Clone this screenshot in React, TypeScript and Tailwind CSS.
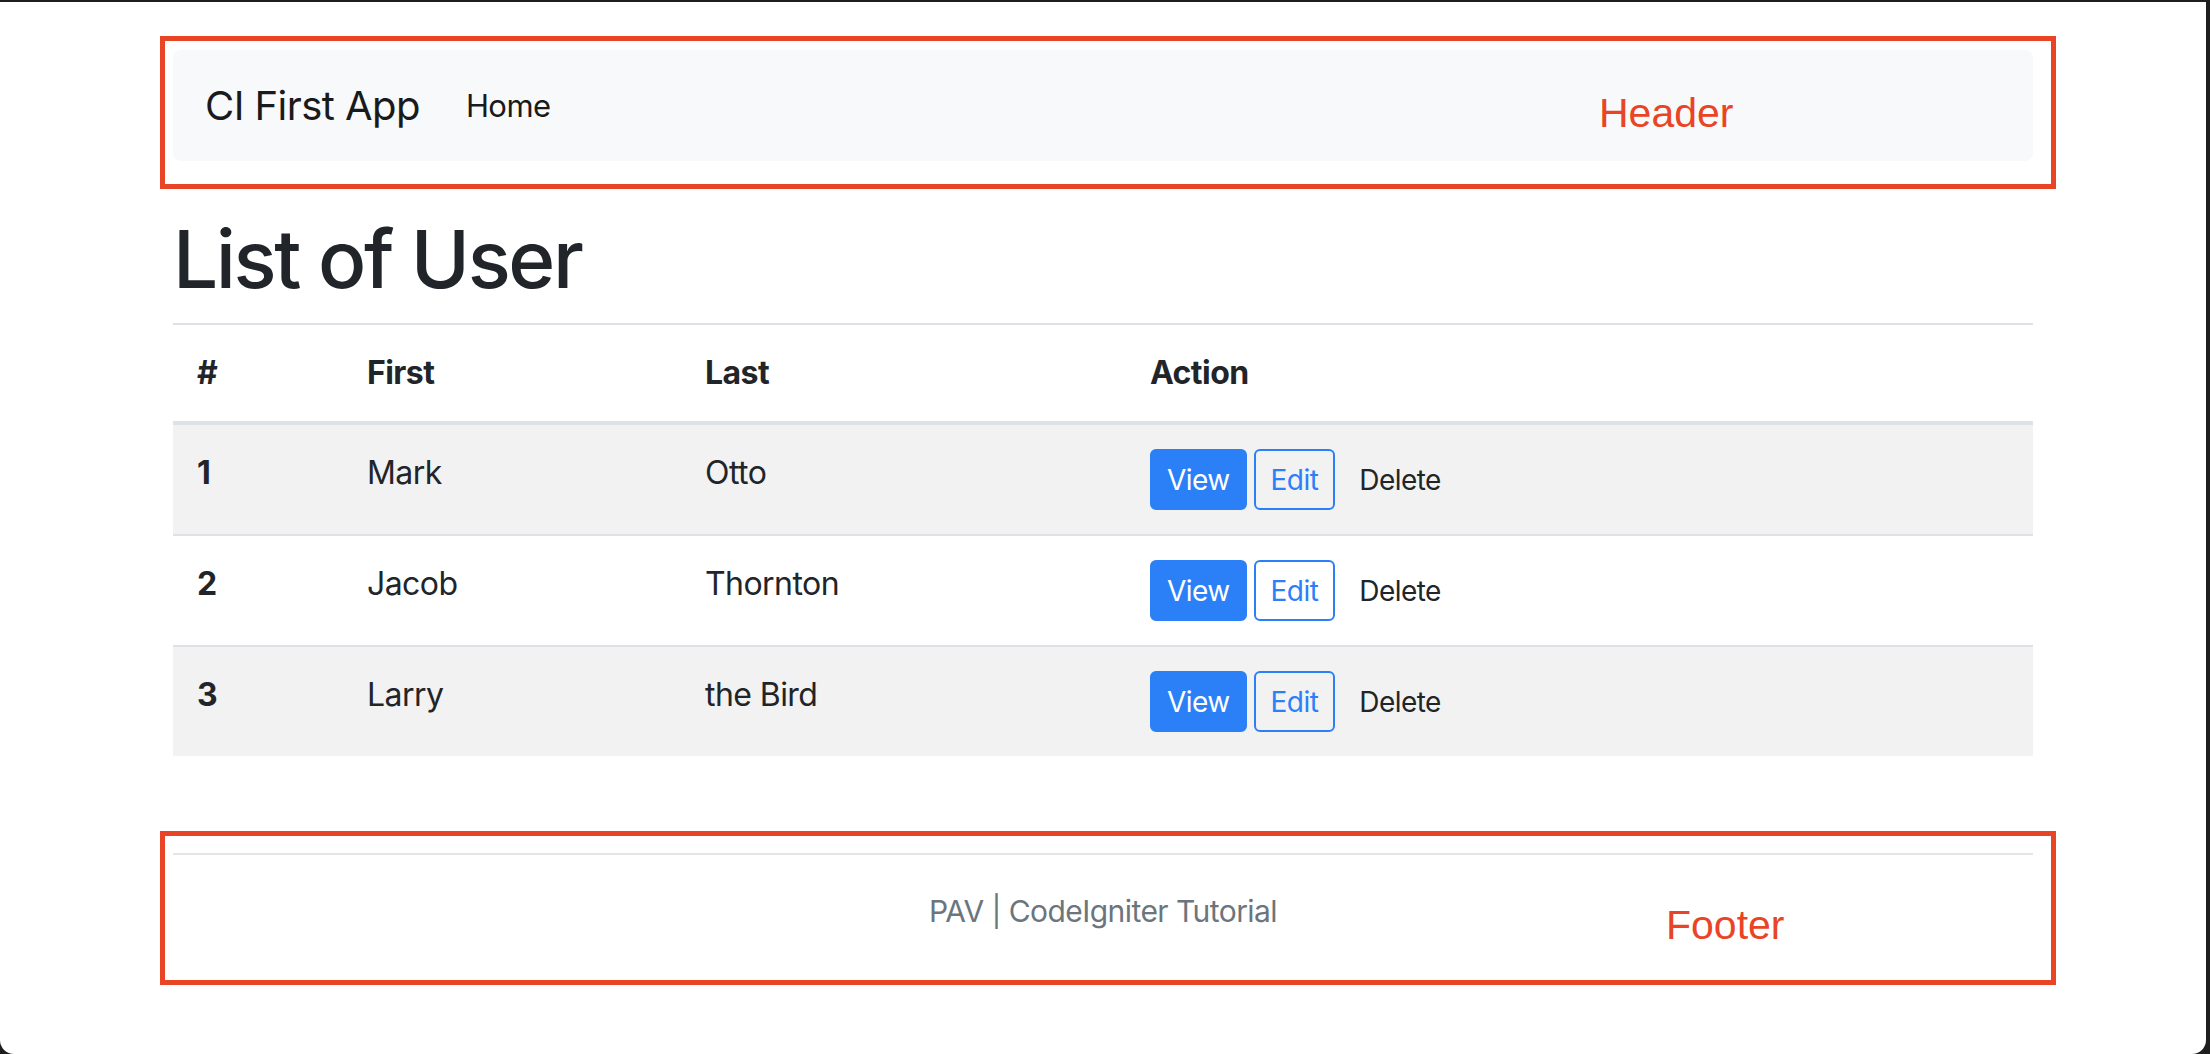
const users = [
  { id: 1, first: "Mark", last: "Otto" },
  { id: 2, first: "Jacob", last: "Thornton" },
  { id: 3, first: "Larry", last: "the Bird" },
];

// red annotation box drawn over a section of the page
function Annotation({ label, boxClass, labelClass }: { label: string; boxClass: string; labelClass: string }) {
  return (
    <div className={`pointer-events-none absolute left-[-13px] right-[-23px] border-[5px] border-[#e94425] ${boxClass}`}>
      <span
        className={`absolute font-['Liberation_Sans',Arial,sans-serif] text-[41px] leading-none tracking-normal text-[#e94425] ${labelClass}`}
      >
        {label}
      </span>
    </div>
  );
}

export default function App() {
  return (
    <div className="h-[1054px] w-full overflow-hidden bg-[#1e1e1e] pt-[2px] pr-[4px]">
      <div className="h-[1052px] rounded-b-[14px] bg-white pt-[48px] font-['Inter',sans-serif] tracking-[-0.035em] text-[#212529]">
        <div className="mx-auto w-[1860px]">
          {/* Header */}
          <div className="relative">
            <nav className="flex h-[111px] items-center rounded-[8px] bg-[#f8f9fa] px-[32px]">
              <span className="mr-[30px] text-[40px] leading-[60px] text-[#1a1a1a]">CI First App</span>
              <a className="px-[16px] text-[31px] leading-[48px] text-[#1a1a1a]">Home</a>
            </nav>
            <Annotation label="Header" boxClass="top-[-14px] bottom-[-28px]" labelClass="left-[1434px] top-[52px]" />
          </div>

          <h1 className="mt-[50px] mb-[16px] text-[80px] font-medium leading-[96px] tracking-[-0.03em]">List of User</h1>

          <table className="w-full border-collapse text-left text-[32px] leading-[48px]">
            <thead>
              <tr className="border-t-2 border-b-4 border-[#dee2e6]">
                <th className="w-[170px] p-[24px] font-bold">#</th>
                <th className="w-[338px] p-[24px] font-bold">First</th>
                <th className="w-[445px] p-[24px] font-bold">Last</th>
                <th className="p-[24px] font-bold">Action</th>
              </tr>
            </thead>
            <tbody>
              {users.map((u, i) => (
                <tr
                  key={u.id}
                  className={`border-[#dee2e6] align-top ${i % 2 === 0 ? "bg-[#f2f2f2]" : "bg-white"} ${i === 0 ? "border-t-0" : "border-t-2"}`}
                >
                  <th className="p-[24px] font-bold">{u.id}</th>
                  <td className="px-[24px] pt-[24px]">{u.first}</td>
                  <td className="px-[24px] pt-[24px]">{u.last}</td>
                  <td className="p-[24px]">
                    <div className="flex h-[61px] items-stretch gap-[7px] text-[28px]">
                      <button className="rounded-[6px] border-2 border-[#2b7ff7] bg-[#2b7ff7] px-[15px] text-white">
                        View
                      </button>
                      <button className="rounded-[6px] border-2 border-[#2b7ff7] bg-transparent px-[15px] text-[#2b7ff7]">
                        Edit
                      </button>
                      <button className="px-[17px] text-[#212529]">Delete</button>
                    </div>
                  </td>
                </tr>
              ))}
            </tbody>
          </table>

          {/* Footer */}
          <div className="relative mt-[97px]">
            <div className="h-[2px] bg-[#e5e5e5]" />
            <p className="mt-[32px] text-center text-[30px] leading-[48px] text-[#6c757d]">
              PAV | CodeIgniter Tutorial
            </p>
            <Annotation label="Footer" boxClass="top-[-22px] h-[154px]" labelClass="left-[1501px] top-[69px]" />
          </div>
        </div>
      </div>
    </div>
  );
}
